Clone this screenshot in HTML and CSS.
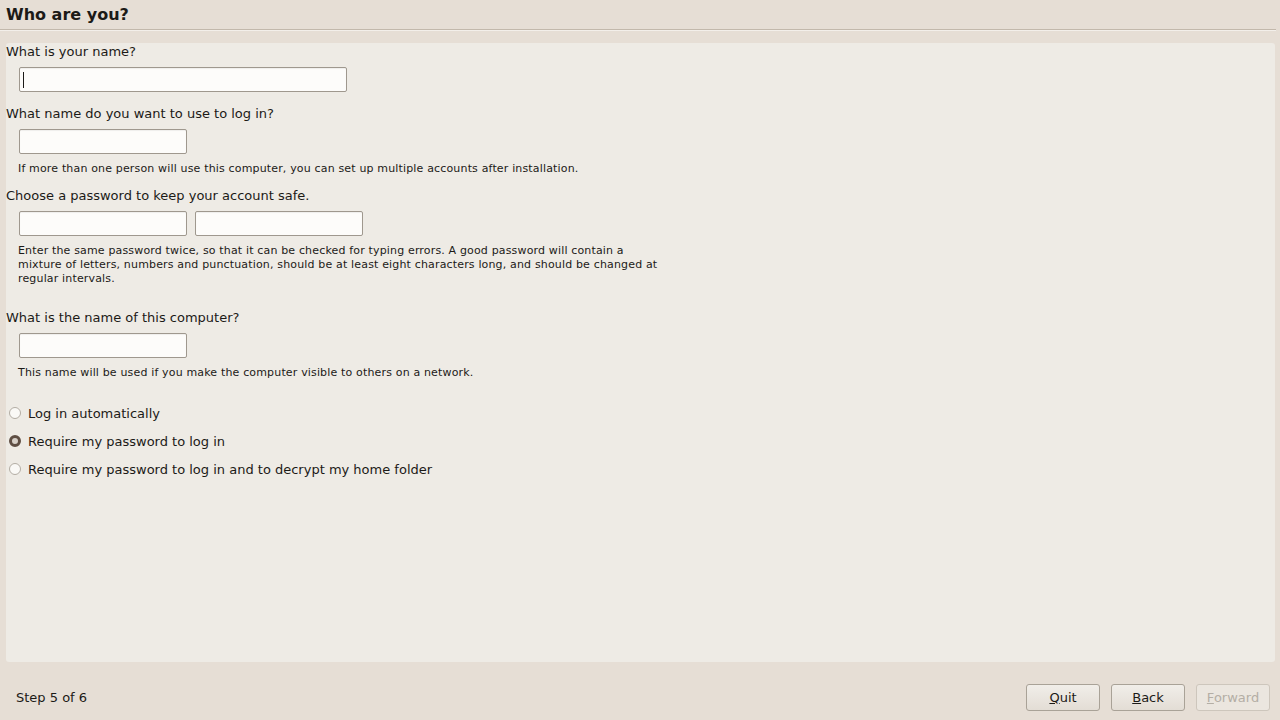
FILE: index.html
```html
<!DOCTYPE html>
<html lang="en">
<head>
    <meta charset="UTF-8">
    <title>Who are you?</title>
    <link rel="stylesheet" href="styles.css">
</head>
<body>
    <div class="window">
        <!-- Page title -->
        <div class="header">
            <h1 class="title">Who are you?</h1>
        </div>
        <div class="separator"></div>

        <!-- Form panel -->
        <div class="panel">
            <div class="label first">What is your name?</div>
            <div class="fields">
                <div class="entry wide focused"><span class="caret"></span></div>
            </div>

            <div class="label">What name do you want to use to log in?</div>
            <div class="fields">
                <div class="entry"></div>
            </div>
            <p class="hint">If more than one person will use this computer, you can set up multiple accounts after installation.</p>

            <div class="label after-hint">Choose a password to keep your account safe.</div>
            <div class="fields">
                <div class="entry"></div>
                <div class="entry"></div>
            </div>
            <p class="hint long">Enter the same password twice, so that it can be checked for typing errors. A good password will contain a mixture of letters, numbers and punctuation, should be at least eight characters long, and should be changed at regular intervals.</p>

            <div class="label spaced">What is the name of this computer?</div>
            <div class="fields">
                <div class="entry"></div>
            </div>
            <p class="hint">This name will be used if you make the computer visible to others on a network.</p>

            <div class="options">
                <div class="option"><span class="radio"></span>Log in automatically</div>
                <div class="option"><span class="radio checked"></span>Require my password to log in</div>
                <div class="option"><span class="radio"></span>Require my password to log in and to decrypt my home folder</div>
            </div>
        </div>

        <!-- Footer -->
        <div class="footer">
            <span class="step">Step 5 of 6</span>
            <div class="buttons">
                <button class="button"><u>Q</u>uit</button>
                <button class="button"><u>B</u>ack</button>
                <button class="button" disabled><u>F</u>orward</button>
            </div>
        </div>
    </div>
</body>
</html>
```

FILE: styles.css
```css
* {
    margin: 0;
    padding: 0;
    box-sizing: border-box;
}

body {
    width: 1280px;
    height: 720px;
    overflow: hidden;
    background: #e6ded5;
    font-family: 'DejaVu Sans', sans-serif;
    color: #1c1a17;
}

.window {
    display: flex;
    flex-direction: column;
    height: 720px;
}

/* Header */
.header {
    height: 29px;
    padding: 5px 0 0 6px;
}

.title {
    font-size: 16px;
    font-weight: bold;
    line-height: 20px;
}

.separator {
    height: 2px;
    border-top: 1px solid #c2b8ab;
    border-bottom: 1px solid #f3efea;
    margin-right: 4px;
}

/* Panel */
.panel {
    height: 619px;
    margin: 12px 5px 0 6px;
    background: #eeebe5;
    border-radius: 3px;
    padding-top: 1px;
}

.label {
    font-size: 13px;
    line-height: 16px;
    margin-top: 14px;
}

.label.first {
    margin-top: 0;
}

.label.after-hint {
    margin-top: 12px;
}

.label.spaced {
    margin-top: 24px;
}

.fields {
    display: flex;
    gap: 8px;
    margin: 7px 0 0 13px;
}

.entry {
    width: 168px;
    height: 25px;
    background: #fdfcfa;
    border: 1px solid #9f988e;
    border-radius: 2px;
    box-shadow: inset 0 1px 1px rgba(0, 0, 0, 0.06);
    padding: 4px 3px;
}

.entry.wide {
    width: 328px;
}

.caret {
    display: block;
    width: 1px;
    height: 16px;
    background: #1c1a17;
}

.hint {
    font-size: 11px;
    line-height: 14px;
    letter-spacing: 0.16px;
    margin: 8px 0 0 12px;
    max-width: 645px;
}

/* Login options */
.options {
    margin-top: 19px;
}

.option {
    display: flex;
    align-items: center;
    height: 28px;
    font-size: 13px;
}

.radio {
    width: 12px;
    height: 12px;
    margin: 0 7px 0 3px;
    border-radius: 50%;
    border: 1px solid #b3ada4;
    background: #faf9f6;
}

.radio.checked {
    border: 3px solid #5e4e43;
    background: #d7d0c8;
}

/* Footer */
.footer {
    flex: 1;
    display: flex;
    justify-content: space-between;
    align-items: center;
    padding: 12px 10px 0 16px;
}

.step {
    font-size: 13px;
}

.buttons {
    display: flex;
    gap: 11px;
}

.button {
    width: 74px;
    height: 27px;
    font-family: 'DejaVu Sans', sans-serif;
    font-size: 13px;
    color: #1c1a17;
    background: linear-gradient(#f1eee9, #e3ddd5);
    border: 1px solid #a9a297;
    border-radius: 3px;
}

.button:disabled {
    color: #b4aea5;
    background: #ebe6df;
    border-color: #cdc6bc;
}
```
